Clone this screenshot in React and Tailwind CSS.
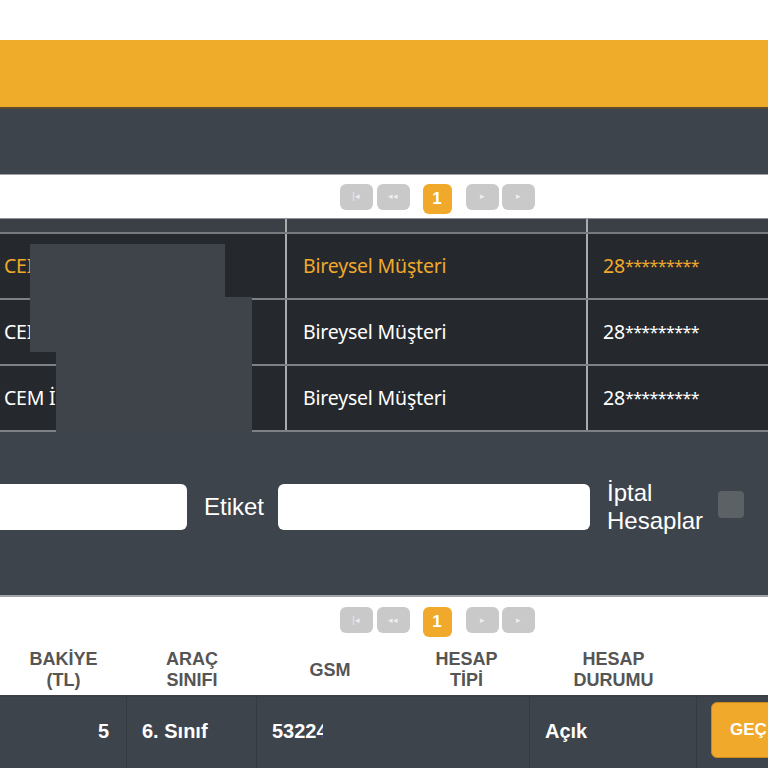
import React from 'react'

const rows = [
  { name: 'CEI', type: 'Bireysel Müşteri', tc: '28', active: true },
  { name: 'CEI', type: 'Bireysel Müşteri', tc: '28' },
  { name: 'CEM İ', type: 'Bireysel Müşteri', tc: '28' },
]

const PagerBtn = ({ glyph }) => (
  <div className="w-[33px] h-[26px] rounded-md bg-[#c9c9c9] flex items-center justify-center text-[9px] text-[#eeeeee] leading-none">
    {glyph}
  </div>
)

const Pager = () => (
  <div className="flex items-center justify-center h-full">
    <div className="flex items-center ml-[106px]">
      <PagerBtn glyph="|◂" />
      <div className="w-1" />
      <PagerBtn glyph="◂◂" />
      <div className="w-[13px]" />
      <div className="w-[29px] h-[30px] rounded-md bg-[#f0a92b] flex items-center justify-center text-white font-bold text-[17px] mt-[4px]">
        1
      </div>
      <div className="w-[14px]" />
      <PagerBtn glyph="▸" />
      <div className="w-[3px]" />
      <PagerBtn glyph="▸" />
    </div>
  </div>
)

const heads = [
  ['BAKİYE', '(TL)'],
  ['ARAÇ', 'SINIFI'],
  ['GSM'],
  ['HESAP', 'TİPİ'],
  ['HESAP', 'DURUMU'],
  [''],
]

export default function App() {
  return (
    <div className="w-[768px] h-[768px] overflow-hidden bg-white font-['Liberation_Sans',Arial,sans-serif] relative">
      <div className="h-[40px] bg-white" />
      <div className="h-[67px] bg-[#efab2a]" />
      <div className="h-[2px] bg-[#5d4b2c]" />
      <div className="h-[65px] bg-[#3e444b]" />
      <div className="h-[1px] bg-[#9ea2a6]" />

      <div className="h-[43px] bg-white">
        <Pager />
      </div>

      {/* customer table */}
      <div className="font-['Noto_Sans','Open_Sans',sans-serif] text-[19.5px] tracking-[-0.2px]">
        <div className="grid grid-cols-[287px_301px_1fr] h-[16px] bg-[#3b4047] border-t border-[#8c8f93] border-b-2 border-b-[#757a7f]">
          <div className="border-r-2 border-[#a9abad]" />
          <div className="border-r-2 border-[#a9abad]" />
          <div />
        </div>
        {rows.map((r, i) => (
          <div
            key={i}
            className={`grid grid-cols-[287px_301px_1fr] h-[66px] bg-[#25282d] border-b-2 border-[#7d8186] ${r.active ? 'text-[#f0a92b]' : 'text-white'}`}
          >
            <div className="border-r-2 border-[#a9abad] flex items-center pl-[4px]">{r.name}</div>
            <div className="border-r-2 border-[#a9abad] flex items-center pl-[16px]">{r.type}</div>
            <div className="flex items-center pl-[15px]">
              {r.tc}
              <span className="text-[16px] tracking-[-0.6px]">*********</span>
            </div>
          </div>
        ))}
      </div>

      {/* filter panel */}
      <div className="h-[163px] bg-[#3e444b] flex items-center pb-[14px] text-white text-[24px] leading-[28px]">
        <div className="w-[203px] h-[46px] -ml-4 bg-white rounded-md shrink-0" />
        <div className="ml-[17px] w-[74px]">Etiket</div>
        <div className="w-[312px] h-[46px] bg-white rounded-md shrink-0" />
        <div className="ml-[17px] w-[111px]">
          <div>İptal</div>
          <div>Hesaplar</div>
        </div>
        <div className="w-[26px] h-[27px] rounded bg-[#5c6166] mb-[4px]" />
      </div>
      <div className="h-[2px] bg-[#a0a4a8]" />

      <div className="h-[46px] bg-white">
        <Pager />
      </div>

      {/* accounts table */}
      <div className="grid grid-cols-[127px_130px_146px_127px_167px_1fr] h-[52px] bg-white text-[#555555] font-bold text-[18px] leading-[21px]">
        {heads.map((h, i) => (
          <div key={i} className="flex flex-col items-center justify-center text-center pt-[2px]">
            {h.map((l, j) => (
              <div key={j}>{l}</div>
            ))}
          </div>
        ))}
      </div>
      <div className="h-[2px] bg-[#3a3f45]" />
      <div className="grid grid-cols-[127px_130px_146px_127px_167px_1fr] h-[80px] bg-[#3e444b] text-white font-bold text-[20px]">
        <div className="border-r border-[#353a40] flex items-start justify-end pr-[17px] pt-[19px]">5</div>
        <div className="border-r border-[#353a40] flex items-start pl-[15px] pt-[19px]">6. Sınıf</div>
        <div className="flex items-start pl-[15px] pt-[19px]">
          <span className="w-[51px] overflow-hidden whitespace-nowrap">53224</span>
        </div>
        <div className="border-r border-[#353a40]" />
        <div className="border-r border-[#353a40] flex items-start pl-[15px] pt-[19px]">Açık</div>
        <div className="pl-[14px] pt-[5px]">
          <div className="w-[80px] h-[56px] rounded-md bg-[#f0a92b] border border-[#c98a1c] flex items-center pl-[18px] text-[17px] text-white">
            GEÇ
          </div>
        </div>
      </div>

      {/* redaction boxes */}
      <div className="absolute left-[30px] top-[244px] w-[195px] h-[108px] bg-[#3f444b]" />
      <div className="absolute left-[56px] top-[297px] w-[196px] h-[135px] bg-[#3f444b]" />
    </div>
  )
}
